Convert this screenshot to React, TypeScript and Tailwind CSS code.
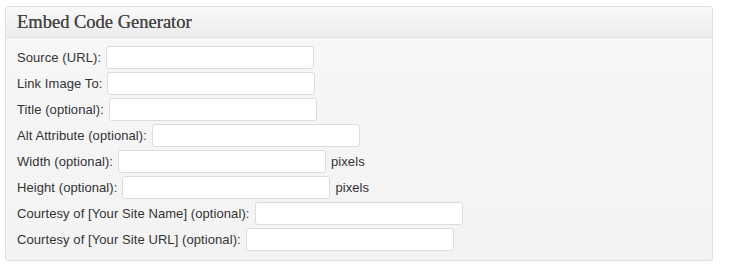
import React from "react";

const rows: { label: string; suffix?: string }[] = [
  { label: "Source (URL):" },
  { label: "Link Image To:" },
  { label: "Title (optional):" },
  { label: "Alt Attribute (optional):" },
  { label: "Width (optional):", suffix: "pixels" },
  { label: "Height (optional):", suffix: "pixels" },
  { label: "Courtesy of [Your Site Name] (optional):" },
  { label: "Courtesy of [Your Site URL] (optional):" },
];

export default function App() {
  return (
    <div className="w-[730px] h-[280px] bg-white pt-[6px] pl-[5px]">
      <div className="w-[708px] border border-[#dfdfdf] rounded-[3px] bg-gradient-to-b from-[#f7f7f7] to-[#f3f3f3] shadow-[inset_0_1px_0_#ffffff]">
        <div className="h-[31px] flex items-center pl-[11px] border-b border-[#dfdfdf] bg-gradient-to-b from-[#f9f9f9] to-[#ececec] rounded-t-[3px]">
          <h3
            className="text-[18.5px] text-[#464646] leading-none pt-[1px] [text-shadow:0_0_0.4px_#464646]"
            style={{ fontFamily: '"Liberation Serif", Georgia, serif' }}
          >
            Embed Code Generator
          </h3>
        </div>
        <div
          className="flex flex-col gap-[3px] pt-[8px] pb-[9px] pl-[11px] text-[13px] text-[#333333] tracking-[0.08px]"
          style={{ fontFamily: '"Liberation Sans", Arial, sans-serif' }}
        >
          {rows.map((r) => (
            <div key={r.label} className="flex items-center h-[23px]">
              <span className="whitespace-nowrap">{r.label}</span>
              <input
                type="text"
                className="ml-[5px] w-[208px] h-[23px] bg-white border border-[#dcdcdc] rounded-[3px] outline-none"
              />
              {r.suffix && <span className="ml-[5px]">{r.suffix}</span>}
            </div>
          ))}
        </div>
      </div>
    </div>
  );
}
